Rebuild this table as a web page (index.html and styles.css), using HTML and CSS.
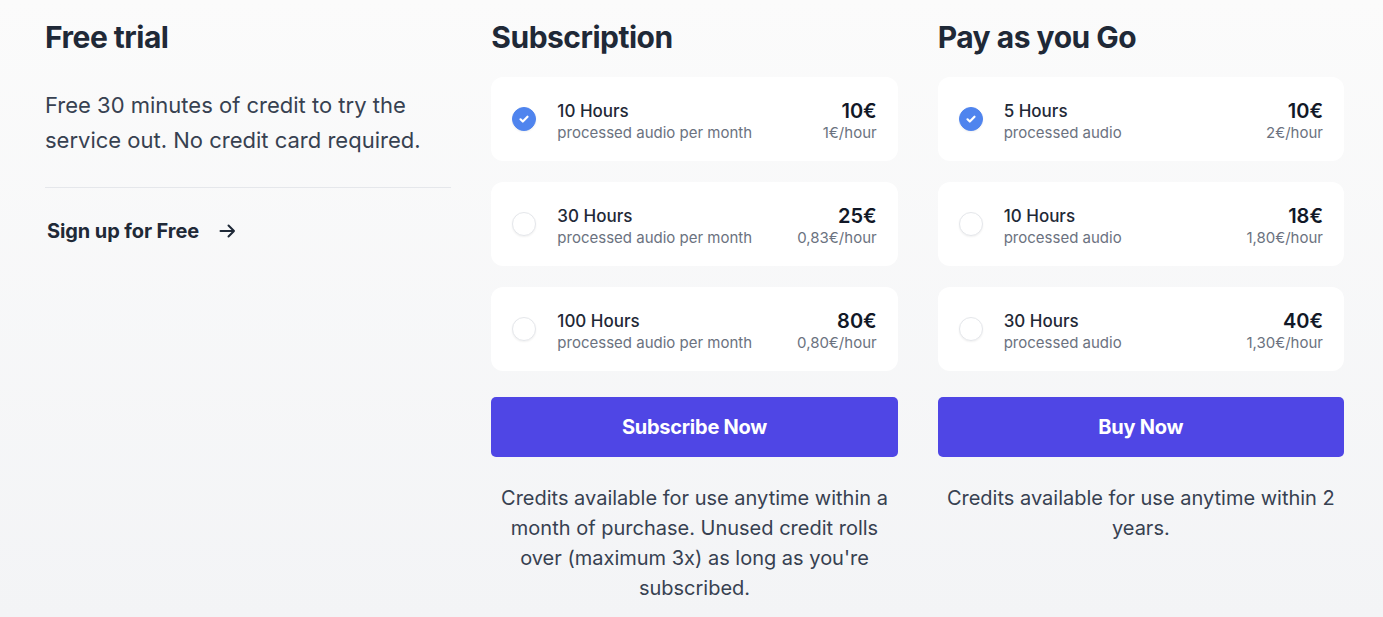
FILE: index.html
```html
<!DOCTYPE html>
<html lang="en">
<head>
<meta charset="utf-8">
<title>Pricing</title>
<link rel="stylesheet" href="styles.css">
</head>
<body>
<main class="pricing">
  <section class="col">
    <h2 class="col-title">Free trial</h2>
    <p class="trial-text">Free 30 minutes of credit to try the service out. No credit card required.</p>
    <hr class="divider">
    <a class="signup" href="#">Sign up for Free
      <svg class="arrow" width="20" height="20" viewBox="0 0 20 20" fill="none" stroke="currentColor" stroke-width="2" stroke-linecap="round" stroke-linejoin="round"><path d="M2.5 10h13.5M10.5 4.5l5.5 5.5-5.5 5.5"/></svg>
    </a>
  </section>

  <section class="col">
    <h2 class="col-title">Subscription</h2>
    <div class="options">
      <label class="option">
        <span class="radio checked"><svg width="12" height="12" viewBox="0 0 12 12" fill="none" stroke="#fff" stroke-width="2.2" stroke-linecap="round" stroke-linejoin="round"><path d="M2.5 6.3l2.3 2.2 4.7-4.8"/></svg></span>
        <span class="opt-main"><span class="opt-name">10 Hours</span><span class="opt-sub">processed audio per month</span></span>
        <span class="opt-price"><span class="price">10€</span><span class="opt-sub">1€/hour</span></span>
      </label>
      <label class="option">
        <span class="radio"></span>
        <span class="opt-main"><span class="opt-name">30 Hours</span><span class="opt-sub">processed audio per month</span></span>
        <span class="opt-price"><span class="price">25€</span><span class="opt-sub">0,83€/hour</span></span>
      </label>
      <label class="option">
        <span class="radio"></span>
        <span class="opt-main"><span class="opt-name">100 Hours</span><span class="opt-sub">processed audio per month</span></span>
        <span class="opt-price"><span class="price">80€</span><span class="opt-sub">0,80€/hour</span></span>
      </label>
    </div>
    <button class="cta">Subscribe Now</button>
    <p class="note">Credits available for use anytime within a month of purchase. Unused credit rolls over (maximum 3x) as long as you're subscribed.</p>
  </section>

  <section class="col">
    <h2 class="col-title">Pay as you Go</h2>
    <div class="options">
      <label class="option">
        <span class="radio checked"><svg width="12" height="12" viewBox="0 0 12 12" fill="none" stroke="#fff" stroke-width="2.2" stroke-linecap="round" stroke-linejoin="round"><path d="M2.5 6.3l2.3 2.2 4.7-4.8"/></svg></span>
        <span class="opt-main"><span class="opt-name">5 Hours</span><span class="opt-sub">processed audio</span></span>
        <span class="opt-price"><span class="price">10€</span><span class="opt-sub">2€/hour</span></span>
      </label>
      <label class="option">
        <span class="radio"></span>
        <span class="opt-main"><span class="opt-name">10 Hours</span><span class="opt-sub">processed audio</span></span>
        <span class="opt-price"><span class="price">18€</span><span class="opt-sub">1,80€/hour</span></span>
      </label>
      <label class="option">
        <span class="radio"></span>
        <span class="opt-main"><span class="opt-name">30 Hours</span><span class="opt-sub">processed audio</span></span>
        <span class="opt-price"><span class="price">40€</span><span class="opt-sub">1,30€/hour</span></span>
      </label>
    </div>
    <button class="cta">Buy Now</button>
    <p class="note">Credits available for use anytime within 2 years.</p>
  </section>
</main>
</body>
</html>
```

FILE: styles.css
```css
* { box-sizing: border-box; }
html, body { height: 100%; }
body {
  margin: 0;
  font-family: Inter, "Noto Sans", sans-serif;
  color: #1f2937;
  background: linear-gradient(180deg, #fbfbfb 0%, #f3f4f6 100%);
  min-height: 617px;
}
.pricing {
  width: 1299px;
  margin-left: 45px;
  padding-top: 19px;
  display: grid;
  grid-template-columns: repeat(3, 1fr);
  column-gap: 40px;
}
.col { display: flex; flex-direction: column; }
.col-title {
  margin: 0;
  font-size: 30px;
  line-height: 36px;
  font-weight: 700;
  color: #1f2937;
  letter-spacing: -0.5px;
}
.trial-text {
  margin: 33px 0 0;
  font-size: 22px;
  line-height: 35px;
  color: #374151;
}
.divider {
  margin: 29px 0 0;
  border: 0;
  border-top: 1px solid #e5e7eb;
  height: 0;
}
.signup {
  margin-top: 31px;
  margin-left: 2px;
  display: flex;
  align-items: center;
  gap: 19px;
  font-size: 20px;
  line-height: 24px;
  font-weight: 700;
  color: #1f2937;
  text-decoration: none;
  letter-spacing: -0.1px;
}
.arrow { color: #1f2937; }
.options {
  margin-top: 22px;
  display: flex;
  flex-direction: column;
  gap: 21px;
}
.option {
  background: #fff;
  border-radius: 12px;
  height: 84px;
  padding: 0 21px;
  display: flex;
  align-items: center;
}
.radio {
  width: 24px;
  height: 24px;
  border-radius: 50%;
  border: 1px solid #e5e7eb;
  background: #fff;
  box-shadow: 0 1px 2px rgba(0,0,0,0.06);
  flex: none;
  display: flex;
  align-items: center;
  justify-content: center;
}
.radio.checked {
  background: #4f84ee;
  border-color: #4f84ee;
}
.opt-main {
  margin-left: 21px;
  flex: 1;
  display: flex;
  flex-direction: column;
  margin-top: 6px;
}
.opt-name {
  font-size: 17px;
  line-height: 22px;
  font-weight: 500;
  color: #1f2937;
}
.opt-sub {
  font-size: 15px;
  line-height: 22px;
  color: #6b7280;
}
.opt-price {
  display: flex;
  flex-direction: column;
  align-items: flex-end;
  margin-top: 6px;
}
.price {
  font-size: 20px;
  line-height: 22px;
  font-weight: 600;
  color: #111827;
}
.cta {
  margin-top: 26px;
  height: 60px;
  border: 0;
  border-radius: 5px;
  background: #4f46e5;
  color: #fff;
  font-family: Inter, "Noto Sans", sans-serif;
  font-size: 20px;
  font-weight: 700;
  letter-spacing: -0.25px;
  cursor: pointer;
}
.note {
  margin: 26px 0 0;
  text-align: center;
  font-size: 20px;
  line-height: 30px;
  color: #374151;
  padding: 0 8px;
}
```
